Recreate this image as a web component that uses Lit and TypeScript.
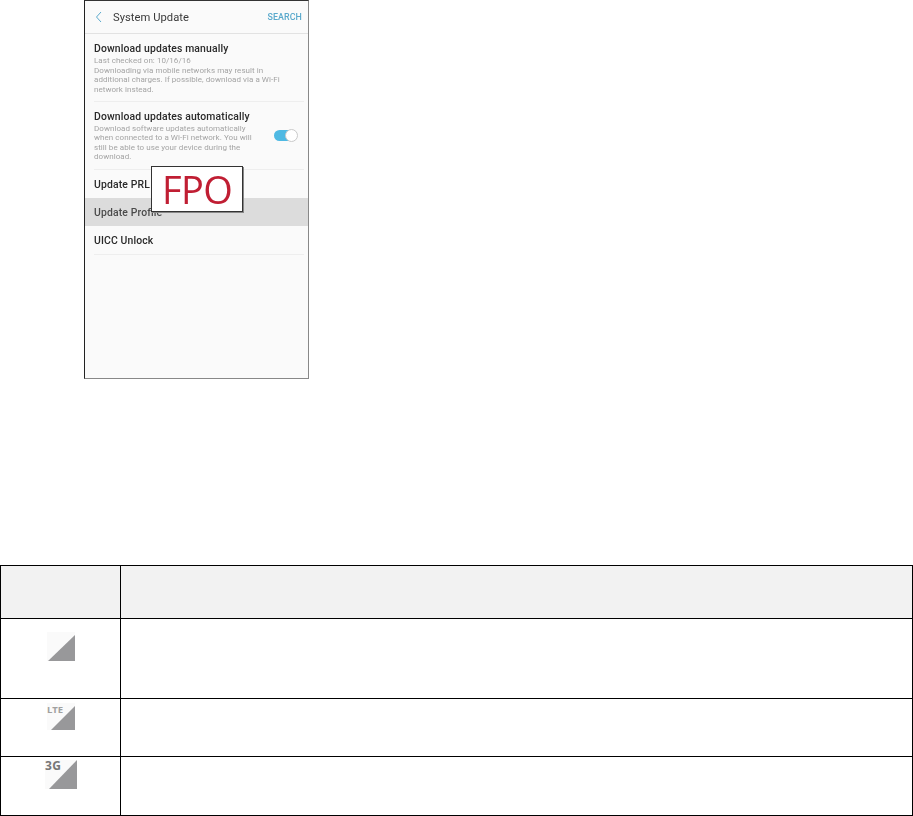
import { LitElement, html, css, svg } from "lit";
import { customElement } from "lit/decorators.js";

const icon = (w: number, h: number, tri: string, label?: string, fill?: string, fs = 8, ls = 0) => html`
  <svg width=${w} height=${h} viewBox="0 0 ${w} ${h}">
    <rect width=${w} height=${h} fill="#fafafa"></rect>
    <polygon points=${tri} fill="#98989a"></polygon>
    ${label ? svg`<text x="0" y="10" letter-spacing=${ls} font-family="Open Sans, sans-serif" font-weight="700" font-size=${fs} fill=${fill}>${label}</text>` : ""}
  </svg>`;

@customElement("app-root")
export class AppRoot extends LitElement {
  static styles = css`
    :host { display: block; width: 913px; height: 816px; background: #fff; font-family: Roboto, sans-serif; overflow: hidden; }
    .phone { position: relative; box-sizing: border-box; margin-left: 84px; width: 225px; height: 379px; background: #fafafa;
      border-top: 1px solid #333; border-left: 1px solid #222; border-right: 1px solid #888; border-bottom: 1px solid #888; }
    .soft { filter: blur(0.3px); }
    .bar { display: flex; align-items: center; height: 33px; box-sizing: border-box; border-bottom: 1px solid #e2e2e2; padding: 0 6px 0 9px; }
    .back { width: 10px; height: 12px; margin-right: 9px; }
    .title { flex: 1; font-size: 11.2px; color: #3a3a3a; letter-spacing: 0.05px; }
    .search { font-size: 8.9px; font-weight: 500; color: #5aa9cc; letter-spacing: 0.1px; }
    .list { padding: 0 4px 0 9px; }
    .row { border-bottom: 1px solid #eeeeee; display: flex; align-items: center; }
    .row.a { height: 67px; }
    .row.b { height: 67px; }
    .row.mid { height: 28px; padding-top: 0; }
    .grow { flex: 1; }
    .a .grow { padding-top: 1px; }
    .h { font-size: 10.4px; font-weight: 500; line-height: 14px; color: #2a2a2a; letter-spacing: 0.14px; }
    .p { font-size: 8px; line-height: 9.5px; color: #a4a4a4; letter-spacing: 0.05px; white-space: pre-line; }
    .plain { font-size: 10.4px; font-weight: 500; color: #2a2a2a; letter-spacing: 0.14px; }
    .mid .plain { padding-top: 1px; }
    .prl { height: 28px; display: flex; align-items: center; }
    .sel { box-sizing: border-box; height: 28px; background: #dcdcdc; display: flex; align-items: center; padding: 1px 0 0 9px; font-size: 10.4px; font-weight: 500; letter-spacing: 0.14px; color: #4a4a4a; }
    .toggle { position: relative; width: 23px; height: 11px; border-radius: 6px; background: #4fb9e3; margin: 0 7px 0 0; }
    .knob { position: absolute; right: -1px; top: -1px; width: 11px; height: 11px; border-radius: 50%; background: #fff; border: 1px solid #c8c8c8; }
    .fpo { position: absolute; left: 66px; top: 165px; box-sizing: border-box; width: 92px; height: 46px; background: #fff;
      border: 1px solid #333; box-shadow: 1px 1px 0 #888; display: flex; align-items: center; justify-content: center;
      font-family: "Open Sans", sans-serif; font-size: 38px; letter-spacing: -0.6px; line-height: 1; color: #c01e33; }
    table { position: absolute; left: 0; top: 565px; width: 913px; border-collapse: separate; border-spacing: 0; table-layout: fixed;
      border-top: 1px solid #000; border-left: 1px solid #000; }
    td { box-sizing: border-box; border-right: 1px solid #000; border-bottom: 1px solid #000; padding: 0; vertical-align: top; }
    td.c1 { width: 120px; }
    tr.head td { height: 53px; background: #f2f2f2; }
    tr.r1 td { height: 80px; }
    tr.r2 td { height: 58px; }
    tr.r3 td { height: 59px; }
    .ic { display: flex; justify-content: center; }
    .r1 .ic { padding-top: 13px; }
    .r2 .ic { padding-top: 4px; }
    .r3 .ic { padding-top: 3px; }
    svg { display: block; overflow: visible; }
  `;

  render() {
    return html`
      <div class="phone">
        <div class="soft">
          <div class="bar">
            <svg class="back" viewBox="0 0 10 12"><path d="M7 1 L2.5 6 L7 11" fill="none" stroke="#5aa9cc" stroke-width="1"></path></svg>
            <span class="title">System Update</span>
            <span class="search">SEARCH</span>
          </div>
          <div class="list">
            <div class="row a"><div class="grow">
              <div class="h">Download updates manually</div>
              <div class="p">Last checked on: 10/16/16
Downloading via mobile networks may result in
additional charges. If possible, download via a Wi-Fi
network instead.</div>
            </div></div>
            <div class="row b"><div class="grow">
              <div class="h">Download updates automatically</div>
              <div class="p">Download software updates automatically
when connected to a Wi-Fi network. You will
still be able to use your device during the
download.</div>
            </div><div class="toggle"><div class="knob"></div></div></div>
            <div class="plain prl">Update PRL</div>
          </div>
          <div class="sel">Update Profile</div>
          <div class="list"><div class="row mid"><span class="plain">UICC Unlock</span></div></div>
        </div>
        <div class="fpo soft">FPO</div>
      </div>
      <table>
        <tr class="head"><td class="c1"></td><td></td></tr>
        <tr class="r1"><td class="c1"><div class="ic">${icon(28, 29, "28,3 1,29 28,29")}</div></td><td></td></tr>
        <tr class="r2"><td class="c1"><div class="ic">${icon(28, 27, "28,3 4,27 28,27", "LTE", "#a0a0a0", 9.5)}</div></td><td></td></tr>
        <tr class="r3"><td class="c1"><div class="ic">${icon(32, 29, "32,0 4,29 32,29", "3G", "#777", 12, 0.5)}</div></td><td></td></tr>
      </table>
    `;
  }
}
